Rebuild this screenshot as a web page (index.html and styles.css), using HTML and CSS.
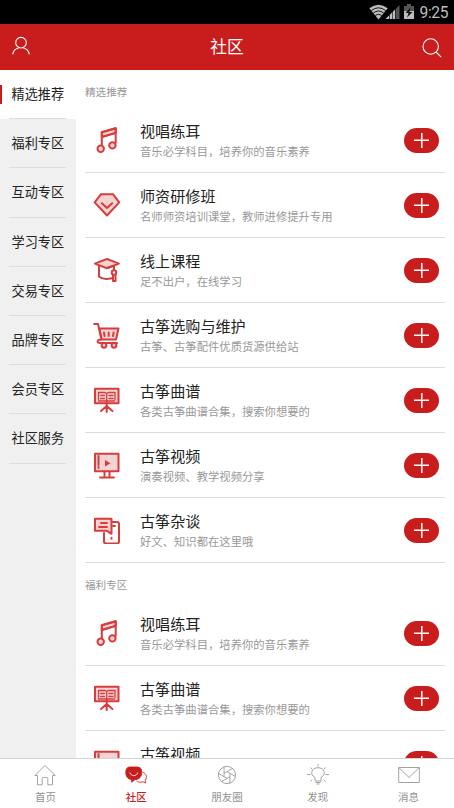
FILE: index.html
```
<!DOCTYPE html>
<html lang="zh-CN">
<head>
<meta charset="utf-8">
<title>社区</title>
<link rel="stylesheet" href="styles.css">
</head>
<body>
<svg class="defs" width="0" height="0">
  <symbol id="music" viewBox="0 0 28 28">
    <path class="tint" d="M8.8 6.3 22.7 2.2v4.7L8.8 11z"/>
    <path d="M8.8 20.5V6.3L22.7 2.2v14.6M8.8 11l13.9-4.1"/>
    <circle class="tint" cx="7.7" cy="22.8" r="3.2"/><circle class="tint" cx="19.4" cy="19.4" r="3.2"/>
  </symbol>
  <symbol id="gem" viewBox="0 0 28 28">
    <path class="tint" d="M8 3.200h12l6.200 8.200L14 24.500 1.700 11.400z"/>
    <path d="m8.800 12.200 5.200 4.700 5.200-4.700"/>
  </symbol>
  <symbol id="cap" viewBox="0 0 28 28">
    <path class="tint" d="M1.900 7.600 14 3l11.900 4.600L14 12.300z"/>
    <path d="M6 10v10.500c3 2.600 8 2.900 12.500 1.700M14 12l7-2.200v4.400"/>
    <circle cx="21" cy="16.500" r="2.200"/><path d="M20 19v6h2.500v-6"/>
  </symbol>
  <symbol id="cart" viewBox="0 0 28 28">
    <path class="tint" d="M6.500 7.500h19L23 18.500H8.500z"/>
    <path d="M1.200 3H5l3.500 15.500c-5 .2-5 3.500-1.500 3.500h17M11 11.500l.6 3.500M15.700 11.500V15M20.600 11.500 20 15"/>
    <circle class="tint" cx="11" cy="24.300" r="2.400"/><circle class="tint" cx="21" cy="24.300" r="2.400"/>
  </symbol>
  <symbol id="stand" viewBox="0 0 28 28">
    <path class="tint" d="M2 2.800h23.500v14.500H2z"/>
    <path class="fine" d="M5.500 13.500v-7H12l1.700 1 1.700-1H22v7M13.700 7.500V19M7.500 9.500h4M16 9.500h4M7.500 12.500h4M16 12.500h4M5.500 15h16"/>
    <path d="M13.700 17v9M13.700 20 8 25M13.700 20l5.700 5"/>
  </symbol>
  <symbol id="screen" viewBox="0 0 28 28">
    <path class="tint" d="M2 2.800h23.500v17.500H2z"/><path d="M5.500 5v9M5.500 16v1M11.500 21v5M16.500 21v5M7 26.500h14"/>
    <path class="solid" d="m12 9 5.500 3.200-5.500 3.200z"/>
  </symbol>
  <symbol id="chat-phone" viewBox="0 0 28 28">
    <path d="M19 6h5q2 0 2 2v17.500q0 2-2 2H13q-2 0-2-2V17"/>
    <path class="tint" d="M2 2.800h16.500v15L14 14.800H2z"/>
    <path d="M8 7h6M6 11h8M20 10h2M18.500 21.800v1"/>
  </symbol>
</svg>

<div class="status">
  <svg width="42" height="16" viewBox="0 0 42 16">
    <path fill="#bdbdbd" d="M.3 4.300Q9.500-3 18.700 4.300L9.500 15.500z"/>
    <path fill="none" stroke="#000" stroke-width=".9" d="M2.300 6.600q7.200-5.600 14.400 0M4.300 9q5.200-4 10.400 0M6.300 11.400q3.200-2.400 6.400 0"/>
    <path fill="#bdbdbd" d="M16.500 15 26 5.500V15z"/><path fill="#555" d="M26 15V5.500L30.500 1v14z"/>
    <path stroke="#000" stroke-width=".6" d="M20.500 8v7M23.500 6v9M26.500 3v12"/>
  </svg>
  <svg class="battery" width="10" height="16" viewBox="0 0 10 16">
    <path fill="#555" d="M0 2h3V0h4v2h3v5H0z"/><path fill="#bdbdbd" d="M0 7h10v8H0z"/><path fill="#111" d="M6.500 3.500 1.500 9h3L3 13.500 8.500 8h-3z"/>
  </svg>
  <span class="clock">9:25</span>
</div>

<header class="header">
  <svg width="18" height="20" viewBox="0 0 18 20"><circle cx="9" cy="6.700" r="5.300"/><path d="M.7 18.300c.8-3.600 3.300-5.800 6.300-6.500M11 11.800c3 .7 5.500 2.900 6.300 6.500"/></svg>
  <h1>社区</h1>
  <svg class="search" width="20" height="20" viewBox="0 0 20 20"><circle cx="8.700" cy="8.500" r="7.700"/><path d="m14 14 5.200 5.200"/></svg>
</header>

<div class="body">
  <nav class="side">
    <a class="on"><span>精选推荐</span></a>
    <a><span>福利专区</span></a>
    <a><span>互动专区</span></a>
    <a><span>学习专区</span></a>
    <a><span>交易专区</span></a>
    <a><span>品牌专区</span></a>
    <a><span>会员专区</span></a>
    <a><span>社区服务</span></a>
  </nav>
  <main class="list">
    <h2>精选推荐</h2>
    <article><svg class="icon"><use href="#music"/></svg><div class="text"><h3>视唱练耳</h3><p>音乐必学科目，培养你的音乐素养</p></div><i class="add"></i></article>
    <article><svg class="icon"><use href="#gem"/></svg><div class="text"><h3>师资研修班</h3><p>名师师资培训课堂，教师进修提升专用</p></div><i class="add"></i></article>
    <article><svg class="icon"><use href="#cap"/></svg><div class="text"><h3>线上课程</h3><p>足不出户，在线学习</p></div><i class="add"></i></article>
    <article><svg class="icon"><use href="#cart"/></svg><div class="text"><h3>古筝选购与维护</h3><p>古筝、古筝配件优质货源供给站</p></div><i class="add"></i></article>
    <article><svg class="icon"><use href="#stand"/></svg><div class="text"><h3>古筝曲谱</h3><p>各类古筝曲谱合集，搜索你想要的</p></div><i class="add"></i></article>
    <article><svg class="icon"><use href="#screen"/></svg><div class="text"><h3>古筝视频</h3><p>演奏视频、教学视频分享</p></div><i class="add"></i></article>
    <article><svg class="icon"><use href="#chat-phone"/></svg><div class="text"><h3>古筝杂谈</h3><p>好文、知识都在这里哦</p></div><i class="add"></i></article>
    <h2>福利专区</h2>
    <article><svg class="icon"><use href="#music"/></svg><div class="text"><h3>视唱练耳</h3><p>音乐必学科目，培养你的音乐素养</p></div><i class="add"></i></article>
    <article><svg class="icon"><use href="#stand"/></svg><div class="text"><h3>古筝曲谱</h3><p>各类古筝曲谱合集，搜索你想要的</p></div><i class="add"></i></article>
    <article><svg class="icon"><use href="#screen"/></svg><div class="text"><h3>古筝视频</h3></div><i class="add"></i></article>
  </main>
</div>

<footer class="tabs">
  <a><svg viewBox="0 0 24 24"><path d="M4.500 12.500H1.800L12 2.500l10.200 10h-2.700v9.300h-4.700v-6.300q0-1-1-1h-3.600q-1 0-1 1v6.300H4.500z"/></svg><span>首页</span></a>
  <a class="on"><svg viewBox="0 0 24 24"><path d="M18.500 9.200c4 1.300 5.200 5 2.700 8l.3 2.800-2.700-1.200c-2.500.9-5 .3-6.300-1"/><path class="bubble" d="M6 4h7c3.500 0 4.700 2 4.700 5.300 0 4.300-2.200 6.800-5.700 7.200h-1l-3.200 2.800-.3-2.800C4 16.300 1.800 13.700 1.800 9.500 1.800 6 3 4 6 4z"/><path class="smile" d="M5.900 9.500c1 4.200 6.800 4.200 7.800 0"/></svg><span>社区</span></a>
  <a><svg viewBox="0 0 24 24"><circle cx="12" cy="12" r="8.600"/><path d="M12 8.600 20.470 13.490M14.940 10.300V20.080M14.940 13.700 6.470 18.590M12 15.400 3.530 10.510M9.060 13.700V3.920M9.060 10.300 17.530 5.410"/></svg><span>朋友圈</span></a>
  <a><svg viewBox="0 0 24 24"><path d="M9 18v-3.500C3.300 11.500 5.500 4.700 12 4.700s8.700 6.800 3 9.800V18zM9.500 19.500h5M10.500 21h3M12 1v2.500M1 11.500h3.500M19.500 11.500H23M4.500 4.500l1.700 1.700M19.500 4.500l-1.700 1.700M4.500 18.500l1.700-1.700M19.500 18.500l-1.700-1.700"/></svg><span>发现</span></a>
  <a><svg viewBox="0 0 24 24"><path d="M1.700 4.500h20.600v15H1.700zM1.700 4.500 12 14.500l10.300-10"/></svg><span>消息</span></a>
</footer>
</body>
</html>
```
FILE: styles.css
```
* { box-sizing: border-box; }

body {
  margin: 0;
  height: 808px;
  display: flex;
  flex-direction: column;
  overflow: hidden;
  background: #fff;
  color: #222;
  font-family: "Noto Sans CJK SC", sans-serif;
}

h1, h2, h3, p { margin: 0; font-weight: 400; }
svg { display: block; flex: none; }
.defs { position: absolute; }

.status {
  flex: none;
  height: 24px;
  display: flex;
  align-items: center;
  justify-content: flex-end;
  padding: 0 6px 0 0;
  background: #000;
  color: #bdbdbd;
}
.status svg { margin-top: -1px; }
.status .battery { margin-right: 6px; margin-left: -7px; }
.clock { font: 15.6px/24px Roboto, sans-serif; letter-spacing: -.4px; margin-top: 1px; }

.header {
  flex: none;
  height: 46px;
  display: flex;
  align-items: center;
  justify-content: space-between;
  padding: 0 12px;
  background: #c91d1d;
  color: #fff;
}
.header h1 { font-size: 16.7px; line-height: 24px; margin: -2px 0 0 2px; }
.header svg { fill: none; stroke: #fff; stroke-width: 1.1; margin-top: -3px; }
.header .search { margin: 2px 0 0; }

.body { flex: 1; min-height: 0; display: flex; overflow: hidden; }

.side { width: 76px; flex: none; background: #f0f0f0; }
.side a {
  display: flex;
  height: 49.2px;
  padding: 0 10px 0 9px;
}
.side span {
  flex: 1;
  border-bottom: 1px solid #ddd;
  padding-left: 2.5px;
  font-size: 13.15px;
  line-height: 48.4px;
  white-space: nowrap;
}
.side .on {
  background: linear-gradient(#c91d1d, #c91d1d) 0 15px / 2px 19px no-repeat #fff;
}

.list { flex: 1; padding: 0 9px; overflow: hidden; }
.list h2 { height: 38px; font-size: 10.6px; line-height: 44px; color: #999; }
article {
  height: 65px;
  display: flex;
  align-items: center;
  padding: 0 6px 0 7.5px;
  border-bottom: 1px solid #ddd;
}
.icon {
  width: 28px;
  height: 28px;
  margin-top: -1px;
  fill: none;
  stroke: #d83c3c;
  stroke-width: 2;
  stroke-linejoin: round;
  stroke-linecap: round;
}
.tint { fill: #f6d3d3; }
.fine { stroke-width: 1.3; }
.solid { fill: #d83c3c; stroke: none; }
.text { flex: 1; height: 41px; margin-left: 19.5px; }
.text h3 { font-size: 15.1px; line-height: 20px; }
.text p { font-size: 11.33px; line-height: 22.5px; color: #999; }
.add {
  width: 35px;
  height: 25px;
  border-radius: 12.5px;
  background:
    linear-gradient(#fff, #fff) center / 15px 1px no-repeat,
    linear-gradient(#fff, #fff) center / 1px 15px no-repeat,
    linear-gradient(#e58e8e, #e58e8e) 10px 11px / 15px 1px no-repeat,
    linear-gradient(#e58e8e, #e58e8e) 18px 5px / 1px 15px no-repeat,
    #c91d1d;
}

.tabs {
  flex: none;
  height: 50px;
  display: flex;
  border-top: 1px solid #d4d4d4;
  background: #fff;
}
.tabs a {
  flex: 1;
  display: flex;
  flex-direction: column;
  align-items: center;
  padding-top: 4px;
  color: #929292;
  font-size: 10.5px;
  line-height: 20px;
}
.tabs svg { width: 24px; height: 24px; fill: none; stroke: currentColor; stroke-width: .85; }
.tabs .on { color: #c91d1d; font-weight: 500; }
.tabs .bubble { fill: #c91d1d; }
.tabs .smile { stroke: #fff; }
```
